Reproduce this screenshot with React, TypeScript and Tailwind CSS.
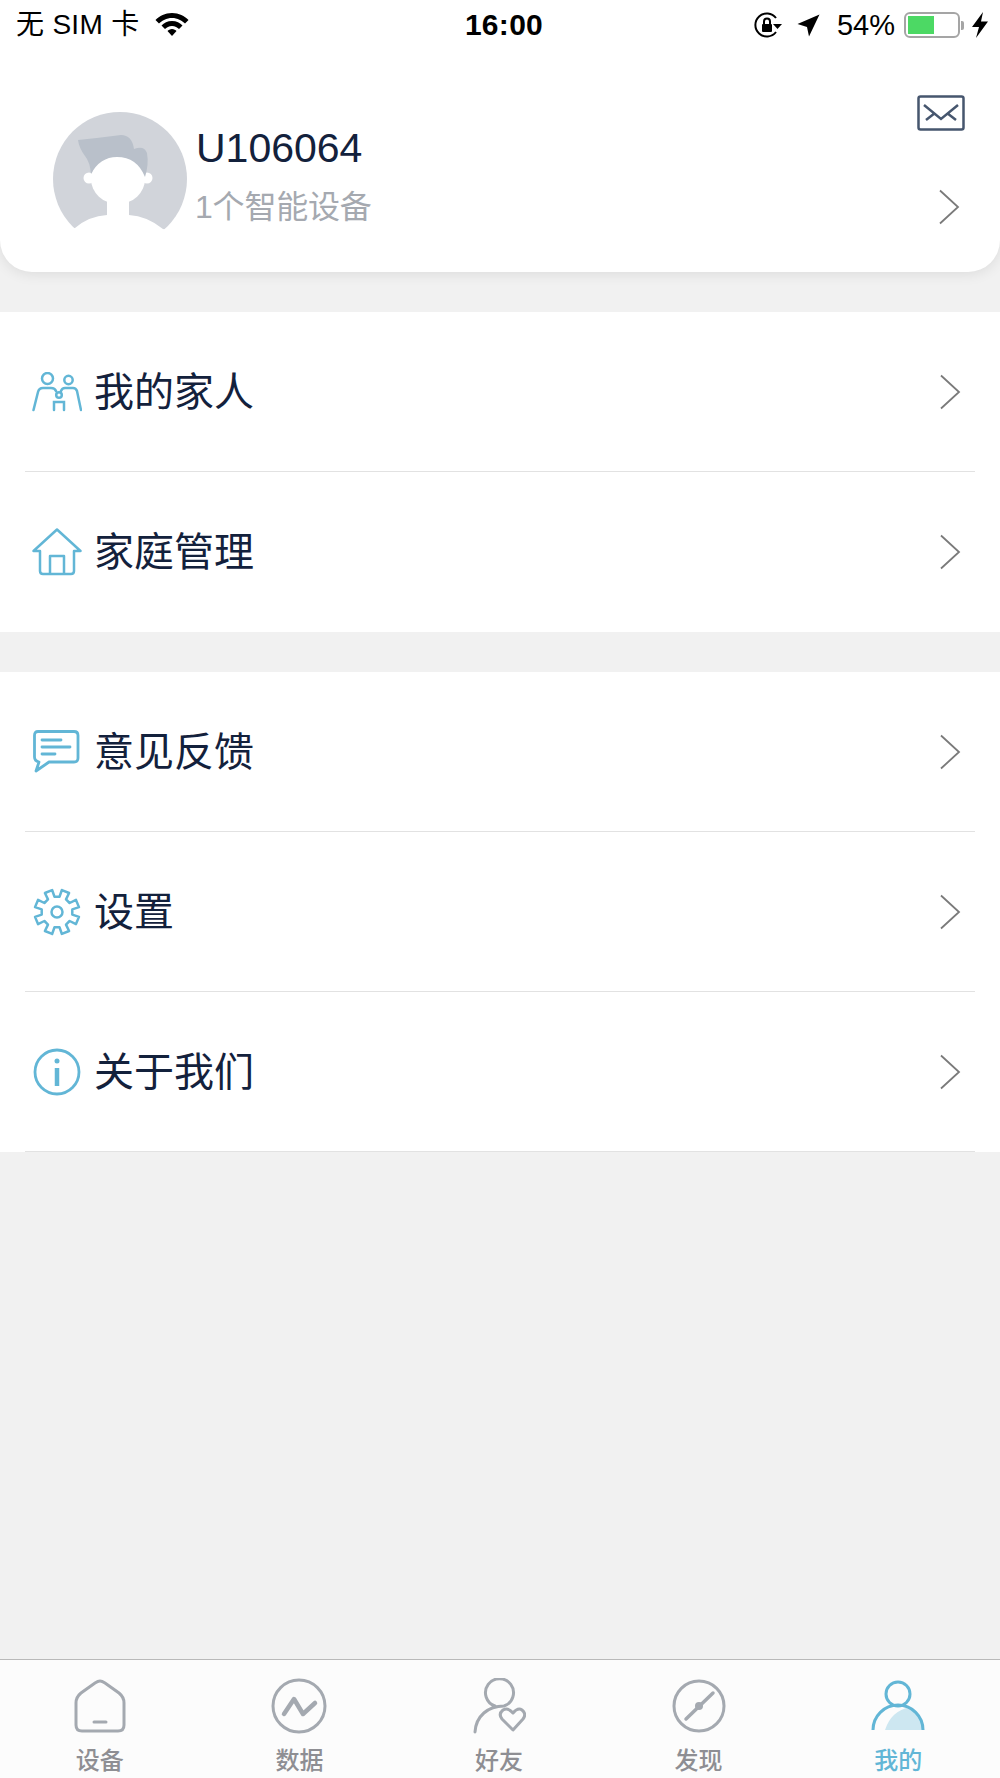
import React from "react";

const FONT = "font-['Liberation_Sans','Noto_Sans_CJK_SC',sans-serif]";
const BLUE = "#62b6d6";
const GRAY = "#a4a9b0";

function Chevron() {
  return (
    <svg width="22" height="36" viewBox="0 0 22 36" fill="none" className="shrink-0">
      <path d="M2 1.5 L20 18 L2 34.5" stroke="#7a7a7a" strokeWidth="1.8" />
    </svg>
  );
}

function Family() {
  return (
    <svg width="50" height="40" viewBox="0 0 50 40" fill="none" stroke={BLUE} strokeWidth="2.500" strokeLinecap="round">
      <circle cx="15.500" cy="6.500" r="5.500" />
      <circle cx="36.500" cy="8" r="4.200" />
      <path d="M1.500 38 L6 20 Q7 16 11 16 H19 Q23 16 24 19" />
      <path d="M29 19 Q30 16 33 16 H41 Q44 16 45 19 L49 38" />
      <circle cx="27" cy="23" r="2.800" />
      <path d="M22 38 V30 H32 V38" />
    </svg>
  );
}

function House() {
  return (
    <svg width="50" height="48" viewBox="0 0 50 48" fill="none" stroke={BLUE} strokeWidth="2.500" strokeLinejoin="round">
      <path d="M1.500 23 L25 1.500 L48.500 23 H42 V43 Q42 46 39 46 H11 Q8 46 8 43 V23 Z" />
      <path d="M18 46 V28 H32 V46" />
    </svg>
  );
}

function Chat() {
  return (
    <svg width="50" height="44" viewBox="0 0 50 44" fill="none" stroke={BLUE} strokeWidth="2.800" strokeLinejoin="round">
      <path d="M6 1.500 H42 Q46 1.500 46 5.500 V28 Q46 32 42 32 H17 L4 41 L7 32 Q2.500 31 2.500 27 V5.500 Q2.500 1.500 6 1.500 Z" />
      <path d="M10 10 H29 M10 17 H38 M10 24 H23" strokeLinecap="round" />
    </svg>
  );
}

const gearPath = Array.from({ length: 8 }, (_, i) => {
  const a = i * 45 + 22.5;
  const pt = (deg: number, r: number) => {
    const t = ((deg - 90) * Math.PI) / 180;
    return `${(24 + r * Math.cos(t)).toFixed(2)} ${(24 + r * Math.sin(t)).toFixed(2)}`;
  };
  return `${i === 0 ? "M" : "L"}${pt(a - 13, 15.5)} L${pt(a - 10, 22.5)} L${pt(a + 10, 22.5)} L${pt(a + 13, 15.5)}`;
}).join(" ") + " Z";

function Gear() {
  return (
    <svg width="48" height="48" viewBox="0 0 48 48" fill="none" stroke={BLUE} strokeWidth="2.500" strokeLinejoin="round">
      <path d={gearPath} />
      <circle cx="24" cy="24" r="5.500" />
    </svg>
  );
}

function Info() {
  return (
    <svg width="48" height="48" viewBox="0 0 48 48" fill="none" stroke={BLUE}>
      <circle cx="24" cy="24" r="22" strokeWidth="2.800" />
      <path d="M24 20 V38" strokeWidth="4.500" />
      <circle cx="24" cy="13" r="2.500" fill={BLUE} stroke="none" />
    </svg>
  );
}

function Avatar() {
  return (
    <svg width="134" height="134" viewBox="0 0 134 134" className="shrink-0">
      <circle cx="67" cy="67" r="67" fill="#d1d4da" />
      <path d="M0 134 V122 L22 116 Q36 104 54 103 V86 H76 V103 Q94 104 110 117 L134 122 V134 Z" fill="#fff" />
      <circle cx="36" cy="66" r="5.500" fill="#fff" />
      <circle cx="94" cy="66" r="5.500" fill="#fff" />
      <ellipse cx="65" cy="67" rx="27" ry="25" fill="#fff" />
      <path d="M25 28 Q45 26 68 23 Q79 23 81 37 Q91 33 94 41 Q96 52 92 65 Q84 45 64 45 Q47 45 38 62 Q37 50 32 44 Q26 36 25 28 Z" fill="#b9c0ca" />
    </svg>
  );
}

function Row({ icon, label }: { icon: React.ReactNode; label: string }) {
  return (
    <div className="mx-[25px] h-[160px] flex items-center border-b border-[#e2e2e2] pl-[7px] pr-[14px]">
      <div className="w-[50px] h-[50px] flex items-center justify-center shrink-0">{icon}</div>
      <div className="ml-[12px] flex-1 text-[40px] leading-none text-[#13213c]">{label}</div>
      <Chevron />
    </div>
  );
}

function Tab({ icon, label, active }: { icon: React.ReactNode; label: string; active?: boolean }) {
  return (
    <div className="flex-1 flex flex-col items-center">
      <div className="h-[60px] flex items-center justify-center">{icon}</div>
      <div className={`mt-[10px] text-[24px] leading-[30px] font-medium ${active ? "text-[#62b6d6]" : "text-[#8e8e93]"}`}>{label}</div>
    </div>
  );
}

export default function App() {
  return (
    <div className={`${FONT} w-[1000px] h-[1778px] bg-[#f1f1f1] flex flex-col overflow-hidden`}>
      <div className="h-[272px] bg-white rounded-b-[32px] shadow-[0_2px_14px_rgba(0,0,0,0.09)] flex flex-col">
        <div className="h-[50px] flex items-center pl-[16px] pr-[12px] text-black text-[28px] leading-none">
          <div className="flex-1 flex items-center gap-[16px]">
            <span className="tracking-[0.3px]">无 SIM 卡</span>
            <svg width="34" height="24" viewBox="0 0 34 24" fill="#000">
              <path d="M17 0 C24 0 29.500 3 33.500 7 L30 10.500 C27 7.500 22.500 5 17 5 C11.500 5 7 7.500 4 10.500 L0.500 7 C4.500 3 10 0 17 0 Z" />
              <path d="M17 8 C21.500 8 25 10 27.500 12.500 L24 16 C22.500 14.500 20 13 17 13 C14 13 11.500 14.500 10 16 L6.500 12.500 C9 10 12.500 8 17 8 Z" />
              <path d="M17 16 C19 16 20.500 17 21.500 18 L17 23 L12.500 18 C13.500 17 15 16 17 16 Z" />
            </svg>
          </div>
          <div className="text-[30px] font-bold tracking-[0.3px] w-[80px] text-center ml-[4px]">16:00</div>
          <div className="flex-1 flex items-center justify-end">
            <svg width="28" height="26" viewBox="0 0 28 26" fill="none" className="mr-[15px]">
              <path d="M22 20 A11.500 11.500 0 1 1 22 6" stroke="#000" strokeWidth="2" />
              <path d="M19 12 H28 L23.500 17 Z" fill="#000" />
              <rect x="8" y="12" width="10" height="8" rx="1" fill="#000" />
              <path d="M10 12 V9.500 A3 3 0 0 1 16 9.500 V12" stroke="#000" strokeWidth="2" />
            </svg>
            <svg width="23" height="23" viewBox="0 0 23 23" fill="#000" className="mr-[17px]">
              <path d="M22.500 0.500 L12 22.500 L10 13 L0.500 10 Z" />
            </svg>
            <span className="text-[29px] mr-[9px]">54%</span>
            <div className="w-[56px] h-[26px] rounded-[6px] border-2 border-[#a5a5a5] p-[2px] flex">
              <div className="w-[26px] bg-[#4cd964]" />
            </div>
            <div className="w-[3px] h-[9px] bg-[#a5a5a5] rounded-r-[2px] ml-[1px] mr-[8px]" />
            <svg width="16" height="26" viewBox="0 0 16 26" fill="#000">
              <path d="M11 0 L0 15 H7 L4 26 L16 9.500 H9 Z" />
            </svg>
          </div>
        </div>
        <div className="relative flex-1 flex items-start pl-[53px] pr-[40px] pt-[62px]">
          <Avatar />
          <div className="ml-[9px] flex-1">
            <div className="text-[41px] leading-[44px] text-[#13213c] mt-[14px]">U106064</div>
            <div className="text-[32px] leading-[40px] tracking-[-0.2px] text-[#a5a9b0] mt-[17px] -ml-[1px]">1个智能设备</div>
          </div>
          <div className="mt-[77px]"><Chevron /></div>
          <svg width="48" height="36" viewBox="0 0 48 36" fill="none" stroke="#46566e" strokeWidth="2.500" className="absolute right-[35px] top-[45px]">
            <rect x="1.500" y="1.500" width="45" height="33" rx="2" />
            <path d="M7 10 L24 24 L41 10 M9 25 L18 18 M39 25 L30 18" />
          </svg>
        </div>
      </div>

      <div className="mt-[40px] bg-white">
        <Row icon={<Family />} label="我的家人" />
        <div className="mx-[25px] h-[160px] flex items-center pl-[7px] pr-[14px]">
          <div className="w-[50px] h-[50px] flex items-center justify-center shrink-0"><House /></div>
          <div className="ml-[12px] flex-1 text-[40px] leading-none text-[#13213c]">家庭管理</div>
          <Chevron />
        </div>
      </div>

      <div className="mt-[40px] bg-white">
        <Row icon={<Chat />} label="意见反馈" />
        <Row icon={<Gear />} label="设置" />
        <Row icon={<Info />} label="关于我们" />
      </div>

      <div className="flex-1" />

      <div className="h-[119px] bg-[#fcfcfc] border-t border-[#b9b9b9] flex pt-[16px] pr-[2px]">
        <Tab
          label="设备"
          icon={
            <svg width="52" height="54" viewBox="0 0 52 54" fill="none" stroke={GRAY} strokeWidth="3" strokeLinecap="round">
              <path d="M26 2 Q24 2 21 4 L7 14 Q2 18 2 24 V46 Q2 52 8 52 H44 Q50 52 50 46 V24 Q50 18 45 14 L31 4 Q28 2 26 2 Z" />
              <path d="M20 43 H32" />
            </svg>
          }
        />
        <Tab
          label="数据"
          icon={
            <svg width="56" height="56" viewBox="0 0 56 56" fill="none" stroke={GRAY} strokeWidth="3" strokeLinecap="round" strokeLinejoin="round">
              <circle cx="28" cy="28" r="26" />
              <path d="M13 36 L23 21 L32 36 L44 25" strokeWidth="4.500" />
            </svg>
          }
        />
        <Tab
          label="好友"
          icon={
            <svg width="54" height="56" viewBox="0 0 54 56" fill="none" stroke={GRAY} strokeWidth="3" strokeLinecap="round" strokeLinejoin="round">
              <path d="M23 28 A14 14 0 1 1 32 28 C16 28 4 38 3 54" />
              <path d="M41 52 L30 41 Q26 36 31 32 Q36 29 41 35 Q46 29 50 32 Q55 36 51 41 Z" />
            </svg>
          }
        />
        <Tab
          label="发现"
          icon={
            <svg width="54" height="54" viewBox="0 0 54 54" fill="none" stroke={GRAY} strokeWidth="3" strokeLinecap="round">
              <circle cx="27" cy="27" r="25" />
              <path d="M14 40 L41 14" strokeWidth="3.500" />
              <circle cx="27" cy="27" r="4" fill={GRAY} stroke="none" />
            </svg>
          }
        />
        <Tab
          active
          label="我的"
          icon={
            <svg width="54" height="52" viewBox="0 0 54 52" fill="none">
              <path d="M14 50 Q20 31 39 27 Q51 34 52 50 Z" fill="#cde7f1" />
              <circle cx="27" cy="14" r="12" stroke={BLUE} strokeWidth="3" />
              <path d="M2 50 A25 25 0 0 1 52 50" stroke={BLUE} strokeWidth="3" />
            </svg>
          }
        />
      </div>
    </div>
  );
}
